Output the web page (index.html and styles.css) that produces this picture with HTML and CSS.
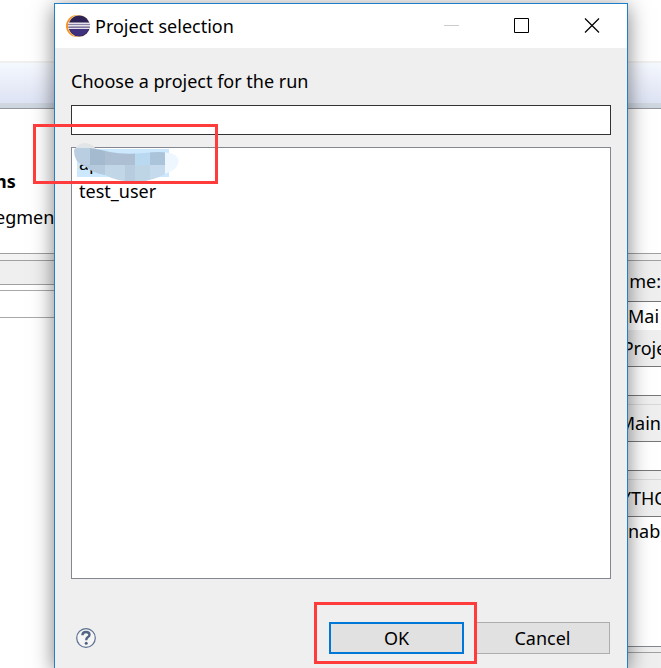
FILE: index.html
```html
<!DOCTYPE html>
<html lang="en">
<head>
<meta charset="utf-8">
<title>Project selection</title>
<link rel="stylesheet" href="styles.css">
</head>
<body>
<div class="screen">
  <div class="pane" aria-hidden="true">
    <div class="toolbar"></div>
    <div class="band"></div>
    <div class="intro"><strong>ns</strong><span>egment</span></div>
    <div class="splitter"></div>
    <div class="tabs"></div>
    <div class="gap"></div>
    <div class="entry"></div>
  </div>

  <main class="dialog" role="dialog" aria-labelledby="title">
    <header class="titlebar">
      <svg class="logo" viewBox="0 0 24 22" aria-hidden="true">
        <circle cx="11" cy="11" r="11" fill="#f7941e"/>
        <circle cx="13" cy="11" r="11" fill="#fbd9ae"/>
        <circle cx="13.2" cy="11" r="10.600" fill="#2c2255"/>
        <path d="M3.500 14h19a10 10 0 0 1-19 0z" fill="#40317f"/>
        <path d="M2 7.500h22v1.500H2zM2 10h22v1.800H2zM2 12.700h22v1.400H2z" fill="#e4e1ec"/>
        <path d="M2 9h22v1H2zM2 11.800h22v.9H2z" fill="#8b83a6"/>
      </svg>
      <h1 id="title">Project selection</h1>
      <div class="controls">
        <button type="button" aria-label="Minimize" disabled><svg viewBox="0 0 16 16"><path d="M0 7.500h15" stroke="#ccc"/></svg></button>
        <button type="button" aria-label="Maximize"><svg viewBox="0 0 16 16"><path d="M.5 .5h14v14H.5z" fill="none" stroke="#000"/></svg></button>
        <button type="button" aria-label="Close"><svg viewBox="0 0 16 16"><path d="M1 .5l14 14M15 .5l-14 14" stroke="#000" stroke-width="1.200"/></svg></button>
      </div>
    </header>
    <form class="content">
      <label for="filter">Choose a project for the run</label>
      <input id="filter" type="text">
      <ul class="projects" role="listbox" aria-label="Projects">
        <li class="selected" role="option" aria-selected="true"><span>ap</span>
          <svg class="smudge" viewBox="0 0 106 42" aria-hidden="true">
            <defs><clipPath id="stroke"><path d="M0 8Q0 5 3 5H16Q28 7 36 9Q50 12 70 10Q92 7 101 12Q106 16 104 21Q102 27 93 30Q80 38 62 39Q44 39 31 32Q18 30 11 23Q0 20 0 8z"/></clipPath></defs>
            <path d="M1 6Q4 0 11 0Q18 0 22 6z" fill="#e2e5e8"/>
            <path d="M60 36h13v4H60z" fill="#d5dbe2"/>
            <g clip-path="url(#stroke)">
              <path d="M0 0h16v22H0z" fill="#b9cee1"/>
              <path d="M16 0h15v22H16z" fill="#a4bbcf"/>
              <path d="M31 0h30v22H31z" fill="#adc0d3"/>
              <path d="M61 0h15v22H61z" fill="#b9d9f1"/>
              <path d="M76 0h15v22H76z" fill="#abc4d9"/>
              <path d="M0 22h31v20H0z" fill="#b5cadd"/>
              <path d="M31 22h20v20H31z" fill="#c1d6e7"/>
              <path d="M51 22h10v20H51z" fill="#b7cddf"/>
              <path d="M61 22h15v20H61z" fill="#bed5e6"/>
              <path d="M76 22h15v20H76z" fill="#c5dbed"/>
              <path d="M91 0h15v42H91z" fill="#eef6ff"/>
            </g>
          </svg>
        </li>
        <li role="option" aria-selected="false">test_user</li>
      </ul>
      <footer class="actions">
        <button class="help" type="button" aria-label="Help">
          <svg viewBox="0 0 20 20"><circle cx="10" cy="10" r="9.300" fill="#f5f5f5" stroke="#5b7091" stroke-width="1.200"/><path d="M6.400 7.300Q6.600 4 10 4Q13.500 4 13.500 6.800Q13.500 8.300 11.700 9.300Q10.300 10.200 10.200 12.300" fill="none" stroke="#506483" stroke-width="2.400"/><circle cx="10.200" cy="15.300" r="1.500" fill="#506483"/></svg>
        </button>
        <button class="push primary" type="button">OK</button>
        <button class="push" type="button">Cancel</button>
      </footer>
    </form>
  </main>

  <div class="pane" aria-hidden="true">
    <div class="toolbar"></div>
    <div class="band"></div>
    <div class="intro"></div>
    <div class="splitter"></div>
    <div class="caption name end">me:</div>
    <div class="value">Mai</div>
    <div class="caption middle">Proje</div>
    <div class="field"></div>
    <div class="spacer"></div>
    <div class="caption end">Main</div>
    <div class="field"></div>
    <div class="spacer"></div>
    <div class="caption middle">YTHO</div>
    <div class="output">nab</div>
    <div class="status"></div>
  </div>

  <div class="mark mark-list"></div>
  <div class="mark mark-ok"></div>
</div>
</body>
</html>
```
FILE: styles.css
```css
* { box-sizing: border-box; }

body {
  margin: 0;
  background: #fff;
  color: #000;
  font: 18px/28px "Noto Sans", "Open Sans", sans-serif;
}

.screen {
  position: relative;
  display: grid;
  grid-template-columns: 54px minmax(0, 1fr) 33px;
  height: 100vh;
  overflow: hidden;
}

/* Window behind the dialog */
.pane {
  display: flex;
  flex-direction: column;
  min-width: 0;
  overflow: hidden;
  white-space: nowrap;
}
.pane > div { flex: none; }
.toolbar { height: 61px; }
.band {
  height: 48px;
  border-top: 2px solid #f0f0f0;
  border-bottom: 1px solid #96989f;
  background: linear-gradient(#f5f8fe, #dee3f4 40px, #d0d8e2 40px, #ccd4de);
}
.intro {
  display: flex;
  flex-direction: column;
  gap: 8px;
  height: 144px;
  padding-top: 58px;
  text-indent: -5px;
}
.splitter {
  height: 8px;
  border: solid #a0a0a0;
  border-width: 1px 0;
  background: #f3f3f3;
}
.tabs {
  height: 24px;
  border-bottom: 1px solid #a0a0a0;
  background: #efefef;
}
.gap { height: 5px; }
.entry {
  height: 28px;
  border: solid #a8a8a8;
  border-width: 1px 0;
}
.caption {
  display: flex;
  align-items: center;
  height: 37px;
  border-bottom: 1px solid #777;
  background: #efefef;
}
.name { height: 41px; }
.end { justify-content: flex-end; }
.middle { justify-content: center; }
.value { height: 28px; }
.field { height: 29px; border-bottom: 1px solid #777; }
.spacer {
  height: 9px;
  border-bottom: 1px solid #d8d8d8;
  background: #efefef;
}
.output { height: 130px; border-bottom: 1px solid #828790; }
.status {
  height: 40px;
  background: linear-gradient(#efefef 5px, #a0a0a0 5px, #a0a0a0 6px, #efefef 6px);
}

/* Dialog */
.dialog {
  position: relative;
  display: flex;
  flex-direction: column;
  min-width: 0;
  margin-top: 3px;
  border: 1px solid #1e7fca;
  border-bottom: 0;
  background: #efefef;
  box-shadow: 0 4px 20px rgba(0, 0, 0, .5);
}
.titlebar {
  display: flex;
  align-items: center;
  height: 44px;
  padding-left: 11px;
  background: #fff;
}
.logo { width: 24px; height: 22px; }
h1 {
  margin: 0 0 0 5px;
  font-size: 18px;
  font-weight: 400;
}
.controls { display: flex; margin-left: auto; }
.controls button {
  width: 70px;
  height: 44px;
  padding: 0;
  border: 0;
  background: none;
}
.controls svg { display: block; width: 16px; height: 16px; margin: auto; }
.content {
  display: flex;
  flex: 1;
  flex-direction: column;
  padding: 19px 16px 14px;
}
#filter {
  height: 30px;
  margin-top: 10px;
  padding: 0 8px;
  border: 1px solid #333;
  background: #fff;
  font: inherit;
}
.projects {
  flex: 1;
  margin: 12px 0 0;
  padding: 1px 5px;
  border: 1px solid #828790;
  background: #fff;
  list-style: none;
}
.projects li {
  width: fit-content;
  padding: 0 2px;
}
.projects .selected {
  position: relative;
  width: 92px;
  height: 28px;
  background: #cce8ff;
}
.smudge {
  position: absolute;
  top: -6px;
  left: -3px;
  width: 106px;
  height: 42px;
}
.actions {
  display: flex;
  align-items: center;
  gap: 11px;
  margin-top: 43px;
  padding-right: 1px;
}
.help {
  width: 30px;
  height: 30px;
  margin-right: auto;
  padding: 0;
  border: 0;
  background: none;
}
.help svg { display: block; width: 20px; height: 20px; margin: auto; }
.push {
  width: 135px;
  height: 32px;
  padding: 0;
  border: 1px solid #adadad;
  background: #e1e1e1;
  color: #000;
  font: inherit;
}
.primary { border: 2px solid #0078d7; }

/* Highlight rectangles drawn over the window */
.mark {
  position: absolute;
  border: 3px solid #ff3b3b;
  pointer-events: none;
}
.mark-list { top: 124px; left: 33px; width: 185px; height: 60px; }
.mark-ok { right: 184px; bottom: 4px; width: 163px; height: 62px; }
```
